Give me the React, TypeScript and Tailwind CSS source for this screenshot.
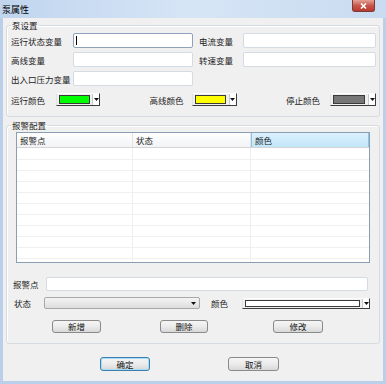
const FONT = "font-['Noto_Sans_CJK_SC','Noto_Sans',sans-serif]";

function Arrow({ className = "" }: { className?: string }) {
  return (
    <svg width="5" height="3" viewBox="0 0 5 3" className={className}>
      <polygon points="0,0 5,0 2.5,3" fill="#111" />
    </svg>
  );
}

// Owner-drawn colour combo: swatch + tiny drop arrow, 3D sunken edge bottom/right.
function ColorPick({ color, w, sw, h = 13 }: { color: string; w: number; sw: number; h?: number }) {
  return (
    <div
      className="flex shrink-0 items-center border-b border-r border-t border-l border-b-[#3c3c3c] border-r-[#3c3c3c] border-t-[#fdfdfd] border-l-[#e3e3e3] bg-[#f0f0f0]"
      style={{ width: w, height: h }}
    >
      <div className="ml-[2px] border border-[#3a3a3a]" style={{ width: sw, height: h - 4, background: color }} />
      <div className="ml-auto h-full w-px bg-[#c8c8c8]" />
      <div className="flex h-full w-[6px] items-center justify-center bg-white">
        <Arrow />
      </div>
    </div>
  );
}

function Field({ w, h = 15, focus = false }: { w: number; h?: number; focus?: boolean }) {
  return (
    <div
      className={`flex shrink-0 items-center rounded-[2px] border bg-white ${
        focus ? "border-[#8ea3bb]" : "border-[#d4dbe3]"
      }`}
      style={{ width: w, height: h }}
    >
      {focus && <span className="ml-[2px] h-[9px] w-px bg-black" />}
    </div>
  );
}

function Btn({ label, w, h = 13, primary = false }: { label: string; w: number; h?: number; primary?: boolean }) {
  return (
    <button
      className={`flex shrink-0 items-center justify-center rounded-[3px] border bg-linear-to-b from-[#f5f5f5] via-[#ebebeb] to-[#d8d8d8] text-[8.5px] leading-none text-[#111] ${
        primary ? "border-[#3c7fb1] shadow-[inset_0_0_0_1px_#a6dcf8]" : "border-[#8a8a8a]"
      }`}
      style={{ width: w, height: h }}
    >
      {label}
    </button>
  );
}

const HEAD = ["报警点", "状态", "颜色"];

export default function App() {
  return (
    <div className={`flex h-[384px] w-[386px] flex-col overflow-hidden bg-[#b9cfea] text-[8.5px] leading-[12px] text-[#1b1b1b] ${FONT}`}>
      {/* title bar */}
      <div className="flex h-[18px] shrink-0 items-start justify-between bg-linear-to-r from-[#c0d5ee] via-[#d6e5f6] to-[#c9dbf0]">
        <span className="pl-[2px] pt-[4px] text-[9px] leading-[12px] text-black">泵属性</span>
        <div className="mr-[11px] flex h-[12px] w-[23px] items-center justify-center rounded-b-[3px] border border-t-0 border-[#7a3a36] bg-linear-to-b from-[#e3a196] via-[#c8564a] to-[#b9382c]">
          <svg width="7" height="6" viewBox="0 0 7 6">
            <path d="M1 0.5 L6 5.5 M6 0.5 L1 5.5" stroke="#fff" strokeWidth="1.6" />
          </svg>
        </div>
      </div>

      {/* client */}
      <div className="mx-[3px] mb-[3px] flex flex-1 flex-col bg-[#f0f0f0]">
        <fieldset className="ml-[3px] mr-[4px] mt-[1px] rounded-[3px] border border-[#d5dbe0] pb-[10px] pl-[4px] pr-[3px] pt-[2px] shadow-[inset_1px_1px_0_#fff]">
          <legend className="px-[1px] leading-[12px]">泵设置</legend>
          <div className="flex flex-col gap-[4px]">
            <div className="flex items-center">
              <span className="w-[62px]">运行状态变量</span>
              <Field w={120} focus />
              <span className="ml-[6px] w-[44px]">电流变量</span>
              <Field w={133} />
            </div>
            <div className="flex items-center">
              <span className="w-[62px]">高线变量</span>
              <Field w={120} />
              <span className="ml-[6px] w-[44px]">转速变量</span>
              <Field w={133} />
            </div>
            <div className="flex items-center">
              <span className="w-[62px]">出入口压力变量</span>
              <Field w={120} />
            </div>
          </div>
          <div className="mt-[7px] flex items-center justify-between">
            <div className="flex items-center">
              <span className="w-[45px]">运行颜色</span>
              <ColorPick color="#00ff00" w={44} sw={31} />
            </div>
            <div className="flex items-center">
              <span className="w-[42px]">高线颜色</span>
              <ColorPick color="#ffff00" w={45} sw={31} />
            </div>
            <div className="flex items-center">
              <span className="w-[44px]">停止颜色</span>
              <ColorPick color="#777777" w={46} sw={32} />
            </div>
          </div>
        </fieldset>

        <fieldset className="ml-[3px] mr-[4px] mt-[2px] rounded-[3px] border border-[#d5dbe0] pb-[10px] pl-[6px] pr-[9px] pt-[1px] shadow-[inset_1px_1px_0_#fff]">
          <legend className="-ml-[2px] px-[1px] leading-[12px]">报警配置</legend>

          {/* alarm list */}
          <div className="ml-[3px] h-[131px] w-[354px] overflow-hidden border border-[#8a9db3] bg-white">
            <div className="grid h-[15px] grid-cols-[116px_118px_118px] border-b border-[#d5d5d5] bg-linear-to-b from-white to-[#f2f3f5]">
              {HEAD.map((h, i) => (
                <div
                  key={h}
                  className={`flex items-center px-[3px] ${
                    i === 2
                      ? "border-l border-r border-[#8cc6e6] bg-linear-to-b from-[#dcf1fd] to-[#c1e5f8]"
                      : "border-r border-[#e2e3e5]"
                  }`}
                >
                  {h}
                </div>
              ))}
            </div>
            {Array.from({ length: 11 }).map((_, r) => (
              <div
                key={r}
                className={`grid grid-cols-[116px_118px_118px] border-b border-[#f0f0f0] ${r === 0 ? "h-[12px]" : "h-[11px]"}`}
              >
                <div className="border-r border-[#efefef]" />
                <div className="border-r border-[#efefef]" />
                <div />
              </div>
            ))}
          </div>

          <div className="mt-[14px] flex items-center">
            <span className="w-[33px]">报警点</span>
            <Field w={322} h={14} />
          </div>
          <div className="mt-[6px] flex items-center">
            <span className="ml-[1px] w-[30px]">状态</span>
            <div className="flex h-[12px] w-[156px] items-center justify-end rounded-[2px] border border-[#a8a8a8] bg-linear-to-b from-[#f4f4f4] to-[#dddddd] pr-[3px]">
              <Arrow />
            </div>
            <span className="ml-[11px] w-[31px]">颜色</span>
            <ColorPick color="#ffffff" w={128} sw={115} h={11} />
          </div>
          <div className="mt-[11px] flex items-center">
            <div className="ml-[39px]">
              <Btn label="新增" w={49} />
            </div>
            <div className="ml-[59px]">
              <Btn label="删除" w={48} />
            </div>
            <div className="ml-[65px]">
              <Btn label="修改" w={50} />
            </div>
          </div>
        </fieldset>

        <div className="mt-[13px] flex items-center">
          <div className="ml-[97px]">
            <Btn label="确定" w={50} h={14} primary />
          </div>
          <div className="ml-[78px]">
            <Btn label="取消" w={51} h={14} />
          </div>
        </div>
      </div>
    </div>
  );
}
